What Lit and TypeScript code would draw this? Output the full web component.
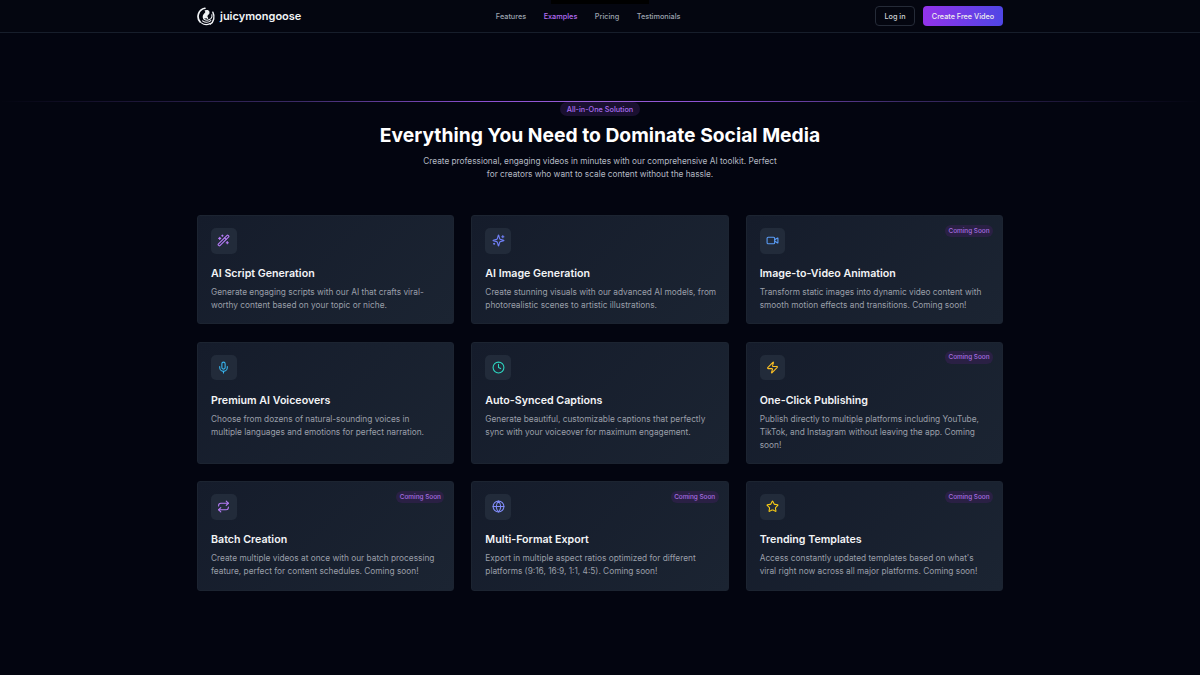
import { LitElement, html, css, svg } from "lit";
import { customElement } from "lit/decorators.js";

const icons: Record<string, any> = {
  wand: svg`<path d="m21.64 3.64-1.28-1.28a1.21 1.21 0 0 0-1.72 0L2.36 18.64a1.21 1.21 0 0 0 0 1.72l1.28 1.28a1.2 1.2 0 0 0 1.72 0L21.64 5.36a1.2 1.2 0 0 0 0-1.72"/><path d="m14 7 3 3"/><path d="M5 6v4"/><path d="M19 14v4"/><path d="M10 2v2"/><path d="M7 8H3"/><path d="M21 16h-4"/><path d="M11 3H9"/>`,
  sparkles: svg`<path d="M9.937 15.5A2 2 0 0 0 8.5 14.063l-6.135-1.582a.5.5 0 0 1 0-.962L8.5 9.936A2 2 0 0 0 9.937 8.5l1.582-6.135a.5.5 0 0 1 .963 0L14.063 8.5A2 2 0 0 0 15.5 9.937l6.135 1.581a.5.5 0 0 1 0 .964L15.5 14.063a2 2 0 0 0-1.437 1.437l-1.582 6.135a.5.5 0 0 1-.963 0z"/><path d="M20 3v4"/><path d="M22 5h-4"/><path d="M4 17v2"/><path d="M5 18H3"/>`,
  video: svg`<path d="m16 13 5.223 3.482a.5.5 0 0 0 .777-.416V7.87a.5.5 0 0 0-.752-.432L16 10.5"/><rect x="2" y="6" width="14" height="12" rx="2"/>`,
  mic: svg`<path d="M12 2a3 3 0 0 0-3 3v7a3 3 0 0 0 6 0V5a3 3 0 0 0-3-3Z"/><path d="M19 10v2a7 7 0 0 1-14 0v-2"/><line x1="12" x2="12" y1="19" y2="22"/>`,
  clock: svg`<circle cx="12" cy="12" r="10"/><polyline points="12 6 12 12 16 14"/>`,
  zap: svg`<path d="M4 14a1 1 0 0 1-.78-1.63l9.9-10.2a.5.5 0 0 1 .86.46l-1.92 6.02A1 1 0 0 0 13 10h7a1 1 0 0 1 .78 1.63l-9.9 10.2a.5.5 0 0 1-.86-.46l1.92-6.02A1 1 0 0 0 11 14z"/>`,
  repeat: svg`<path d="m17 2 4 4-4 4"/><path d="M3 11v-1a4 4 0 0 1 4-4h14"/><path d="m7 22-4-4 4-4"/><path d="M21 13v1a4 4 0 0 1-4 4H3"/>`,
  globe: svg`<circle cx="12" cy="12" r="10"/><path d="M12 2a14.5 14.5 0 0 0 0 20 14.5 14.5 0 0 0 0-20"/><path d="M2 12h20"/>`,
  star: svg`<path d="M11.525 2.295a.53.53 0 0 1 .95 0l2.31 4.679a2.12 2.12 0 0 0 1.595 1.16l5.166.756a.53.53 0 0 1 .294.904l-3.736 3.638a2.12 2.12 0 0 0-.611 1.878l.882 5.14a.53.53 0 0 1-.771.56l-4.618-2.428a2.12 2.12 0 0 0-1.973 0L6.396 21.01a.53.53 0 0 1-.77-.56l.881-5.139a2.12 2.12 0 0 0-.611-1.879L2.16 9.795a.53.53 0 0 1 .294-.906l5.165-.755a2.12 2.12 0 0 0 1.597-1.16z"/>`,
};

const cards = [
  { icon: "wand", color: "#b57bf6", title: "AI Script Generation", desc: "Generate engaging scripts with our AI that crafts viral-worthy content based on your topic or niche.", soon: false },
  { icon: "sparkles", color: "#707ff5", title: "AI Image Generation", desc: "Create stunning visuals with our advanced AI models, from photorealistic scenes to artistic illustrations.", soon: false },
  { icon: "video", color: "#5a9cf6", title: "Image-to-Video Animation", desc: "Transform static images into dynamic video content with smooth motion effects and transitions. Coming soon!", soon: true },
  { icon: "mic", color: "#38b6f0", title: "Premium AI Voiceovers", desc: "Choose from dozens of natural-sounding voices in multiple languages and emotions for perfect narration.", soon: false },
  { icon: "clock", color: "#2dd4bf", title: "Auto-Synced Captions", desc: "Generate beautiful, customizable captions that perfectly sync with your voiceover for maximum engagement.", soon: false },
  { icon: "zap", color: "#fbbf24", title: "One-Click Publishing", desc: "Publish directly to multiple platforms including YouTube, TikTok, and Instagram without leaving the app. Coming soon!", soon: true },
  { icon: "repeat", color: "#b57bf6", title: "Batch Creation", desc: "Create multiple videos at once with our batch processing feature, perfect for content schedules. Coming soon!", soon: true },
  { icon: "globe", color: "#818cf8", title: "Multi-Format Export", desc: "Export in multiple aspect ratios optimized for different platforms (9:16, 16:9, 1:1, 4:5). Coming soon!", soon: true },
  { icon: "star", color: "#facc15", title: "Trending Templates", desc: "Access constantly updated templates based on what's viral right now across all major platforms. Coming soon!", soon: true },
];

@customElement("app-root")
export class AppRoot extends LitElement {
  static styles = css`
    :host {
      display: block;
      width: 1200px;
      height: 675px;
      overflow: hidden;
      position: relative;
      background: #030510;
      font-family: Inter, "Liberation Sans", sans-serif;
      color: #fff;
    }
    .notch {
      position: absolute;
      left: 551px;
      top: 0;
      width: 98px;
      height: 4px;
      background: #000;
    }
    nav {
      height: 32px;
      border-bottom: 1px solid #171e2b;
      display: flex;
      justify-content: center;
      background: #040610;
    }
    .nav-in {
      width: 806px;
      display: flex;
      justify-content: space-between;
      align-items: center;
    }
    .brand {
      display: flex;
      align-items: center;
      gap: 4px;
      font-size: 11px;
      font-weight: 600;
      color: #f1f3f6;
    }
    .links {
      display: flex;
      gap: 17.5px;
      font-size: 7.3px;
      font-weight: 500;
      color: #9ca3af;
    }
    .links .on {
      color: #b26cf2;
    }
    .actions {
      display: flex;
      gap: 8px;
      font-size: 7.25px;
      font-weight: 500;
    }
    .btn {
      height: 20px;
      box-sizing: border-box;
      display: flex;
      align-items: center;
      justify-content: center;
      border-radius: 4px;
    }
    .login {
      width: 40px;
      border: 1px solid #252b38;
      color: #d1d5db;
    }
    .cta {
      width: 80px;
      background: linear-gradient(90deg, #9333ea, #4f46e5);
      color: #eee;
    }
    .hero {
      position: relative;
      margin-top: 68px;
      display: flex;
      flex-direction: column;
      align-items: center;
    }
    .rule {
      position: absolute;
      left: 0;
      right: 0;
      top: 0;
      height: 1px;
      background: linear-gradient(90deg, transparent 0%, #3b2a66 25%, #8b4fd0 40%, #9a5fd8 50%, #8b4fd0 60%, #3b2a66 75%, transparent 100%);
    }
    .pill {
      margin-top: 1px;
      height: 14px;
      width: 80px;
      display: flex;
      align-items: center;
      justify-content: center;
      border-radius: 7px;
      background: #1a1030;
      color: #a96cee;
      font-size: 7.3px;
      font-weight: 500;
    }
    h1 {
      margin: 7px 0 0;
      font-size: 19.3px;
      line-height: 24px;
      font-weight: 700;
      color: #fff;
    }
    .sub {
      margin: 8px 0 0;
      width: 362px;
      text-align: center;
      font-size: 8.27px;
      line-height: 13px;
      color: #b4b9c3;
    }
    .grid {
      width: 806px;
      margin: 34px auto 0;
      display: grid;
      grid-template-columns: repeat(3, 1fr);
      grid-template-rows: 109px 122px 110px;
      gap: 17.5px 17px;
    }
    .card {
      position: relative;
      box-sizing: border-box;
      padding: 12px 11px 12px 13px;
      border-radius: 3px;
      background: linear-gradient(135deg, #151c2b, #1b2432);
      border: 1px solid #1c2431;
    }
    .icon {
      width: 25.5px;
      height: 25.5px;
      border-radius: 5px;
      background: #222b3a;
      display: flex;
      align-items: center;
      justify-content: center;
    }
    .icon svg {
      width: 13px;
      height: 13px;
      fill: none;
      stroke-width: 2;
      stroke-linecap: round;
      stroke-linejoin: round;
    }
    h3 {
      margin: 12.5px 0 0;
      font-size: 10.67px;
      line-height: 16px;
      font-weight: 600;
      color: #f3f4f6;
    }
    .desc {
      margin: 4px 0 0;
      font-size: 8.3px;
      line-height: 13px;
      color: #9a9fa9;
    }
    .soon {
      position: absolute;
      top: 8.5px;
      right: 9px;
      height: 12.5px;
      width: 48px;
      display: flex;
      align-items: center;
      justify-content: center;
      border-radius: 6.25px;
      background: #2a2044;
      color: #a86ee0;
      font-size: 6.4px;
      font-weight: 500;
    }
  `;

  render() {
    return html`
      <div class="notch"></div>
      <nav>
        <div class="nav-in">
          <div class="brand">
            <svg width="19" height="19" viewBox="0 0 24 24" fill="none" stroke="#f1f3f6" stroke-linecap="round">
              <path d="M10 1.6A10.6 10.6 0 0 0 4 19" stroke-width="2.2"/>
              <path d="M20 6.5c2.8 5.5 1.4 12.5-3.4 15.2" stroke-width="1.8"/>
              <path d="M5.5 20c3.5 2.6 7.5 2.8 11 .8" stroke-width="1.4"/>
              <path d="M7 17.5c3.2 2.2 7.4 2.2 10.4-.3" stroke-width="1.4"/>
              <path d="M8.5 14.5c-1.5-3 .2-5 2-6.6 1-.9 1-2.2.2-3 1.8-.9 3.7-.3 4.3 1.4.4 1.3-.2 2.4-1.4 3.3-1.6 1.2-1.6 3-.2 4.6" stroke-width="1.6" fill="#f1f3f6"/>
              <path d="M9 15.5c2.5 1.6 6 1.4 8.5-.8 1.3-1.2 1.8-3 1.3-5" stroke-width="1.4"/>
            </svg>
            <span>juicymongoose</span>
          </div>
          <div class="links">
            <span>Features</span>
            <span class="on">Examples</span>
            <span>Pricing</span>
            <span>Testimonials</span>
          </div>
          <div class="actions">
            <div class="btn login">Log in</div>
            <div class="btn cta">Create Free Video</div>
          </div>
        </div>
      </nav>
      <section class="hero">
        <div class="rule"></div>
        <div class="pill">All-in-One Solution</div>
        <h1>Everything You Need to Dominate Social Media</h1>
        <p class="sub">Create professional, engaging videos in minutes with our comprehensive AI toolkit. Perfect for creators who want to scale content without the hassle.</p>
      </section>
      <div class="grid">
        ${cards.map(
          (c) => html`
            <article class="card">
              ${c.soon ? html`<span class="soon">Coming Soon</span>` : ""}
              <div class="icon">
                <svg viewBox="0 0 24 24" style="stroke:${c.color}">${icons[c.icon]}</svg>
              </div>
              <h3>${c.title}</h3>
              <p class="desc">${c.desc}</p>
            </article>
          `
        )}
      </div>
    `;
  }
}
